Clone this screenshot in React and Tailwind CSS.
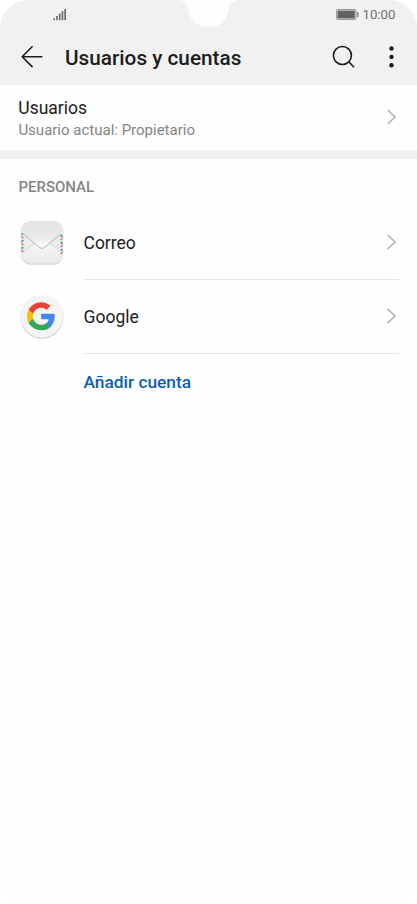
const ROBOTO = "font-['Roboto','Liberation_Sans',sans-serif]";

function Chevron() {
  return (
    <svg className="h-4 w-[10px] shrink-0" viewBox="0 0 10 16" fill="none" stroke="#b0b0b0" strokeWidth="1.6">
      <path d="M0.7 1 L8 8 L0.7 15" />
    </svg>
  );
}

function StatusBar() {
  return (
    <div className="relative flex h-[29px] items-center justify-between pl-[53px] pr-[22px]">
      <svg className="h-3 w-[14px]" viewBox="0 0 14 12" fill="#6e6e6e">
        <rect x="0.3" y="9.4" width="1.7" height="1.8" />
        <rect x="3.1" y="7" width="1.7" height="4.2" />
        <rect x="5.9" y="4.6" width="1.7" height="6.6" />
        <rect x="8.6" y="2.2" width="1.7" height="9" />
        <rect x="11.3" y="0" width="1.7" height="11.2" />
      </svg>
      <svg className="absolute left-[178px] top-0 h-7 w-[61px]" viewBox="0 0 61 28" fill="#fefefe">
        <path d="M0 0 C7 0.5 9 3.5 10 9 C11.5 20 19 27 30.5 27 C42 27 49 20 50.5 9 C51.5 3.5 54 0.5 61 0 Z" />
      </svg>
      <div className="flex items-center gap-[3px]">
        <svg className="h-[11px] w-[23px]" viewBox="0 0 23 11">
          <rect x="0.5" y="0.5" width="19.5" height="10" rx="1.3" fill="#c4c4c4" stroke="#999999" />
          <rect x="1.8" y="1.8" width="16.9" height="7.4" fill="#616161" />
          <rect x="21" y="3" width="1.5" height="5" rx="0.5" fill="#858585" />
        </svg>
        <span className="w-[33px] whitespace-nowrap pl-[0.5px] text-[13.2px] leading-[29px] text-[#707070]">10:00</span>
      </div>
    </div>
  );
}

function Header() {
  return (
    <div className="flex h-14 items-center pl-[21px] pr-[23px]">
      <svg className="h-[22px] w-[22px]" viewBox="0 0 22 22" fill="none" stroke="#1c1c1c" strokeWidth="1.6" strokeLinecap="round" strokeLinejoin="round">
        <path d="M11.1 0.8 L1.2 10.7 L11.1 20.6 M1.2 10.7 H20.8" />
      </svg>
      <h1 className="ml-[22px] flex-1 whitespace-nowrap pt-px text-[20.75px] font-medium leading-[28px] text-[#1c1c1c]">Usuarios y cuentas</h1>
      <svg className="h-6 w-6" viewBox="0 0 24 24" fill="none" stroke="#1c1c1c" strokeWidth="1.6" strokeLinecap="round">
        <circle cx="10.4" cy="10.5" r="9" />
        <path d="M16.8 16.9 L21.6 21.7" />
      </svg>
      <svg className="ml-[34px] h-6 w-1" viewBox="0 0 4 24" fill="#1c1c1c" overflow="visible">
        <circle cx="1.5" cy="3.5" r="2.2" />
        <circle cx="1.5" cy="11.9" r="2.2" />
        <circle cx="1.5" cy="20.2" r="2.2" />
      </svg>
    </div>
  );
}

function MailIcon() {
  return (
    <svg className="h-[46px] w-[46px]" viewBox="0 0 46 46">
      <defs>
        <linearGradient id="mailBody" x1="0" y1="0" x2="0" y2="1">
          <stop offset="0" stopColor="#e4e4e4" />
          <stop offset="0.5" stopColor="#ececec" />
          <stop offset="1" stopColor="#e9e9e9" />
        </linearGradient>
        <linearGradient id="mailFront" x1="0" y1="0" x2="0" y2="1">
          <stop offset="0" stopColor="#fafafa" />
          <stop offset="1" stopColor="#e8e8e8" />
        </linearGradient>
        <linearGradient id="mailFlap" x1="0" y1="0" x2="0" y2="1">
          <stop offset="0" stopColor="#e4e4e4" />
          <stop offset="0.6" stopColor="#eaeaea" />
          <stop offset="1" stopColor="#fdfdfd" />
        </linearGradient>
        <clipPath id="mailClip"><rect x="1.9" y="1.2" width="42.2" height="42.3" rx="9.5" /></clipPath>
      </defs>
      <rect x="1.6" y="2" width="42.8" height="42.9" rx="9.5" fill="#e6e6e6" />
      <rect x="2.2" y="2.5" width="41.6" height="41.7" rx="9.5" fill="#cacaca" />
      <g clipPath="url(#mailClip)">
        <rect x="1" y="1" width="44" height="43" fill="url(#mailBody)" />
        <path d="M2 35 L23 19 L44 35 V44 H2 Z" fill="url(#mailFront)" />
        <path d="M5 32 L15 23 M31 23 L41 32" stroke="#d6d6d6" strokeWidth="0.8" />
        <path d="M2.9 13 l1.4 1.6 M2.9 20 l1.4 1.6 M2.9 27 l1.4 1.6 M41.8 16.5 l1.4 -1.6 M41.8 23.5 l1.4 -1.6 M41.8 30.5 l1.4 -1.6" stroke="#3f7fb5" strokeWidth="1.5" />
        <path d="M2.9 16.5 l1.4 1.6 M2.9 23.5 l1.4 1.6 M2.9 30.5 l1.4 1.6 M41.8 20 l1.4 -1.6 M41.8 27 l1.4 -1.6 M41.8 34 l1.4 -1.6" stroke="#df6e62" strokeWidth="1.5" />
        <path d="M2.3 14.5 v1.8 M2.3 21.5 v1.8 M2.3 28.5 v1.8 M43.7 16.5 v1.8 M43.7 23.5 v1.8 M43.7 30.5 v1.8" stroke="#6d9cc4" strokeWidth="1" />
        <path d="M1 11.5 L4.5 14 L20.6 27.2 Q23 29.4 25.4 27.2 L41.5 14 L45 11.5 V1 H1 Z" fill="url(#mailFlap)" />
        <path d="M4 13.8 L20.6 27.4 Q23 29.6 25.4 27.4 L42 13.8" fill="none" stroke="#b8b8b8" strokeWidth="1" />
      </g>
    </svg>
  );
}

function GoogleIcon() {
  return (
    <svg className="h-[46px] w-[46px]" viewBox="0 0 46 46">
      <circle cx="22.8" cy="23.2" r="21.8" fill="#ebebeb" />
      <circle cx="22.8" cy="23.3" r="21.2" fill="#cfcfcf" />
      <circle cx="22.8" cy="22.4" r="21.1" fill="#f4f4f4" />
      <g transform="translate(6.8 6.9) scale(1.28)">
        <path fill="#4285f4" d="M22.56 12.25c0-.78-.07-1.53-.2-2.25H12v4.26h5.92c-.26 1.37-1.04 2.53-2.21 3.31v2.77h3.57c2.08-1.92 3.28-4.74 3.28-8.09z" />
        <path fill="#34a853" d="M12 23c2.97 0 5.46-.98 7.28-2.66l-3.57-2.77c-.98.66-2.23 1.06-3.71 1.06-2.86 0-5.29-1.93-6.16-4.53H2.18v2.84C3.99 20.53 7.7 23 12 23z" />
        <path fill="#fbbc05" d="M5.84 14.09c-.22-.66-.35-1.36-.35-2.09s.13-1.43.35-2.09V7.07H2.18C1.43 8.55 1 10.22 1 12s.43 3.45 1.18 4.93l3.66-2.84z" />
        <path fill="#ea4335" d="M12 5.38c1.62 0 3.06.56 4.21 1.64l3.15-3.15C17.45 2.09 14.97 1 12 1 7.7 1 3.99 3.47 2.18 7.07l3.66 2.84c.87-2.6 3.3-4.53 6.16-4.53z" />
      </g>
    </svg>
  );
}

function AccountRow({ icon, name }) {
  return (
    <li className="flex h-[74px] items-center pl-[19px] pr-[18px]">
      {icon}
      <div className="ml-[18.5px] flex h-full flex-1 items-center justify-between border-b border-[#e6e6e6] pr-[2px]">
        <span className="text-[17.5px] leading-6 text-[#1c1c1c]">{name}</span>
        <div className="pb-px"><Chevron /></div>
      </div>
    </li>
  );
}

export default function App() {
  return (
    <div className="h-[904px] w-[417px] bg-white">
      <main className={`flex h-full flex-col overflow-hidden rounded-[28px] bg-[#fefefe] ${ROBOTO}`}>
        <header className="h-[85px] bg-[#f1f1f1]">
          <StatusBar />
          <Header />
        </header>
        <section className="flex h-[65px] items-center justify-between pl-[18px] pr-5">
          <div>
            <h2 className="pl-[0.3px] text-[17.5px] leading-6 text-[#1c1c1c]">Usuarios</h2>
            <p className="pl-[0.4px] text-[15px] leading-5 text-[#858585]">Usuario actual: Propietario</p>
          </div>
          <div className="pb-px"><Chevron /></div>
        </section>
        <div className="h-[9px] bg-[#f1f1f1]" />
        <section>
          <h3 className="h-[47px] pl-[18.4px] pt-[17.5px] text-[15px] font-medium leading-5 text-[#858585]">PERSONAL</h3>
          <ul>
            <AccountRow icon={<MailIcon />} name="Correo" />
            <AccountRow icon={<GoogleIcon />} name="Google" />
          </ul>
          <button className="ml-[83.4px] mt-4 block text-[17.35px] font-medium leading-6 text-[#0a5fb4]">Añadir cuenta</button>
        </section>
      </main>
    </div>
  );
}
